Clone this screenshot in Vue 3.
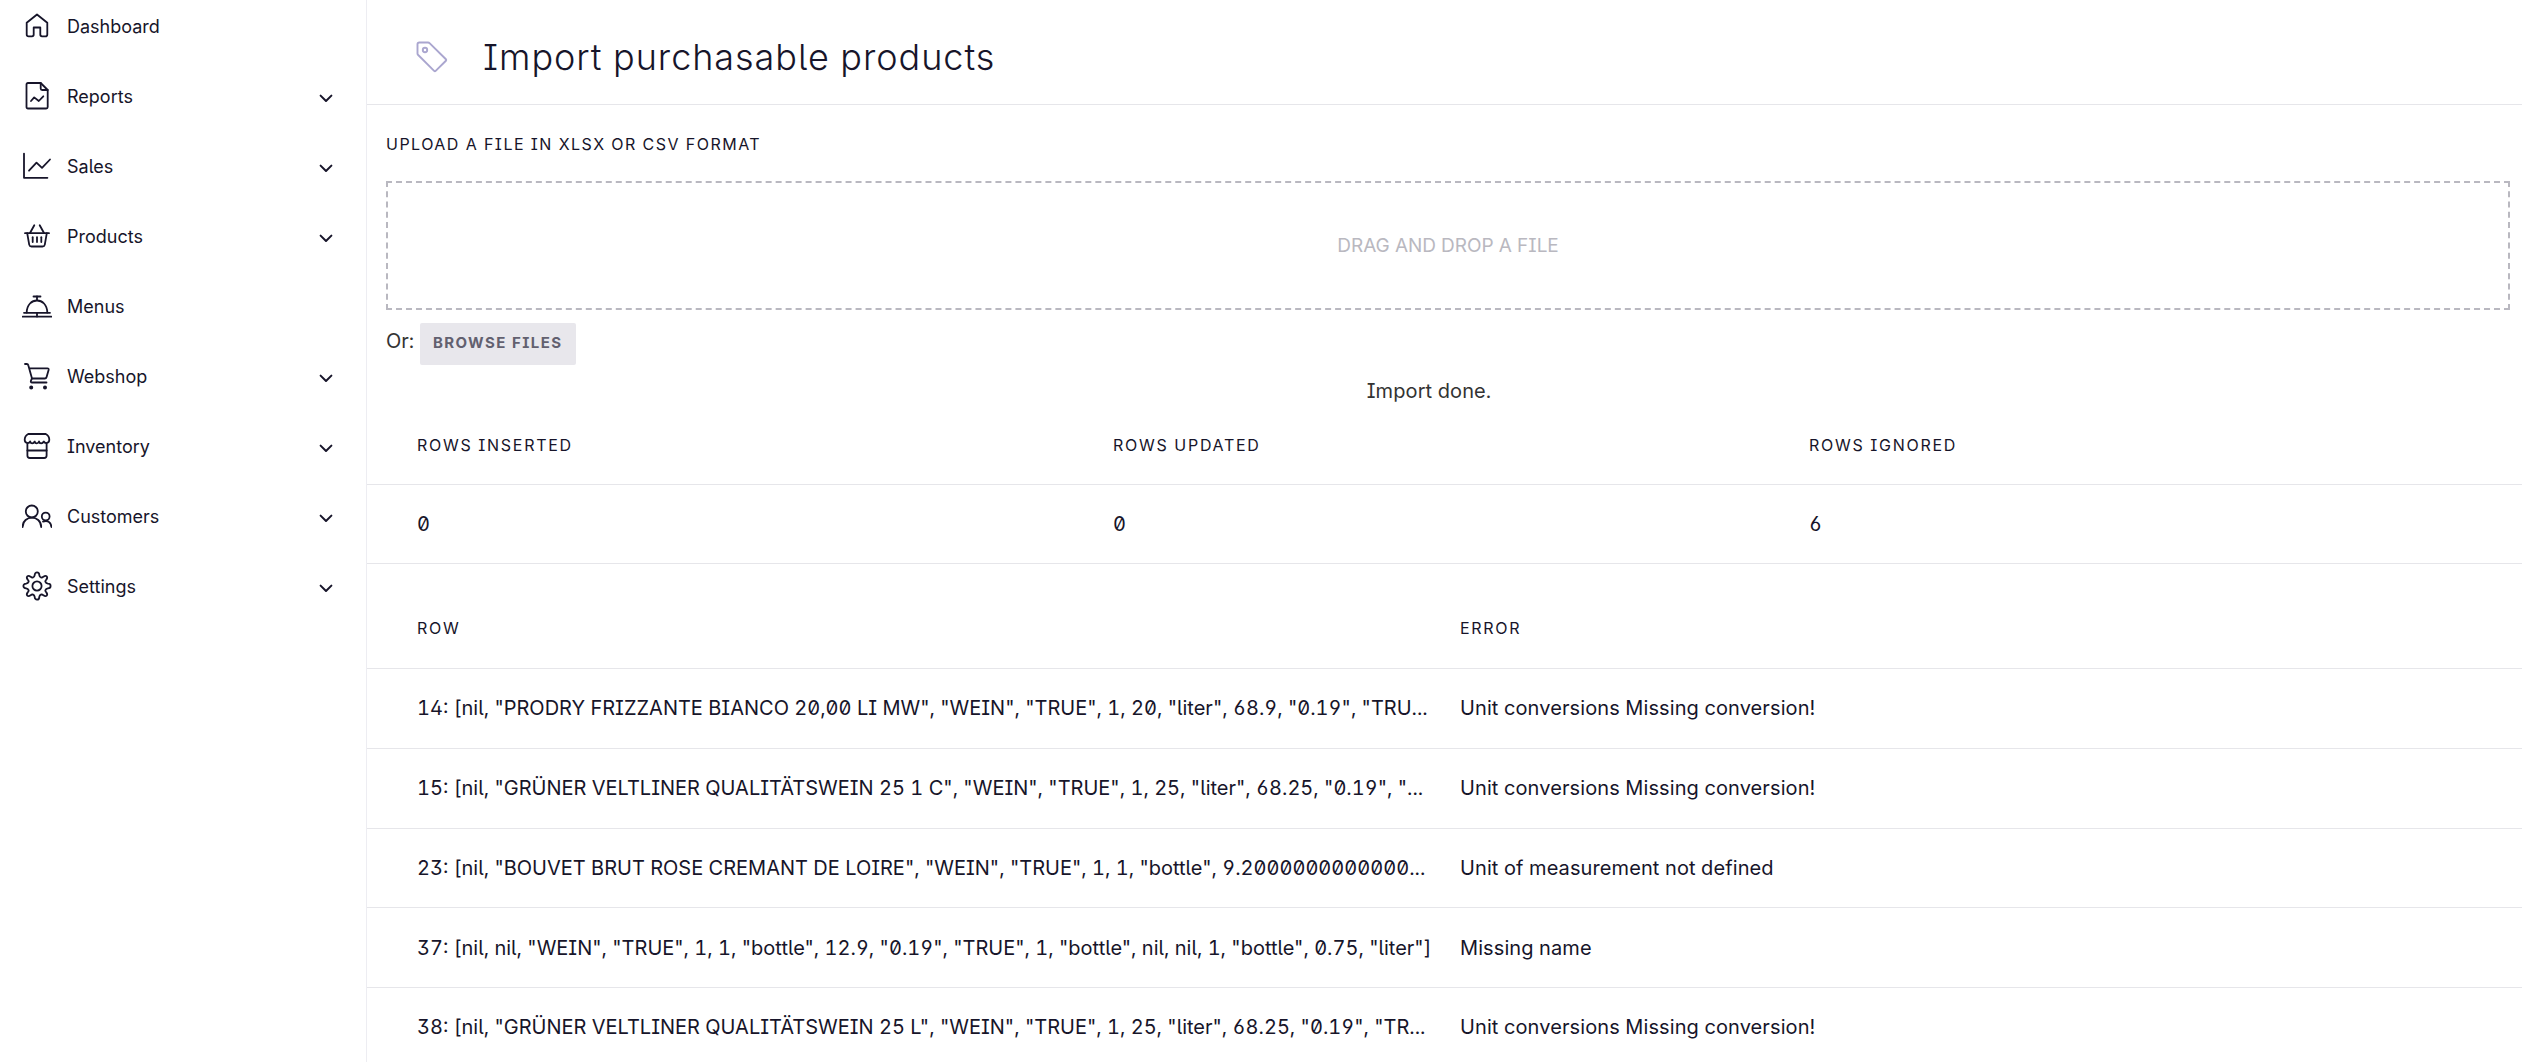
<template>
  <div class="layout">
    <nav class="sidebar">
      <a v-for="item in menu" :key="item.label" class="nav-item">
        <svg class="nav-icon" width="30" height="30" viewBox="0 0 30 30">
          <path v-for="d in item.paths" :key="d" :d="d" />
          <circle v-for="c in item.dots" :key="c" :cx="c" cy="26.4" r="1.1" class="dot" />
        </svg>
        <span class="nav-label">{{ item.label }}</span>
        <svg v-if="item.open" class="chevron" width="14" height="14" viewBox="0 0 14 14">
          <path d="M1.6 4.6L7 10l5.4-5.4" />
        </svg>
      </a>
    </nav>

    <main class="content">
      <header class="page-header">
        <svg class="tag" width="32" height="32" viewBox="0 0 32 32">
          <path d="M1.5 3.3Q1.5 1.5 3.3 1.5L12 1.5Q13 1.5 13.8 2.3L29.9 18.2Q30.6 19 29.9 19.8L19.7 29.9Q18.9 30.6 18.1 29.9L2.2 14Q1.5 13.3 1.5 12.4Z" />
          <circle cx="9" cy="9" r="2.2" />
        </svg>
        <h1>Import purchasable products</h1>
      </header>

      <section class="upload">
        <label class="upload-label">Upload a file in xlsx or csv format</label>
        <div class="dropzone">DRAG AND DROP A FILE</div>
        <div class="browse">
          <span>Or:</span>
          <button>Browse files</button>
        </div>
      </section>

      <p class="status">Import done.</p>

      <div class="table summary">
        <div class="row head">
          <div v-for="s in summary" :key="s.label">{{ s.label }}</div>
        </div>
        <div class="row">
          <div v-for="s in summary" :key="s.label">{{ s.value }}</div>
        </div>
      </div>

      <div class="table errors">
        <div class="row head">
          <div>Row</div>
          <div>Error</div>
        </div>
        <div v-for="e in errors" :key="e.row" class="row">
          <div>{{ e.row }}</div>
          <div class="message">{{ e.error }}</div>
        </div>
      </div>
    </main>
  </div>
</template>

<script setup>
const menu = [
  {
    label: 'Dashboard',
    open: false,
    paths: ['M4.7 11.8L15 3.5l10.3 8.3V23.4Q25.3 25.3 23.4 25.3H20Q18.3 25.3 18.3 23.6V16.5H11.7V23.6Q11.7 25.3 10 25.3H6.6Q4.7 25.3 4.7 23.4Z']
  },
  {
    label: 'Reports',
    open: true,
    paths: [
      'M6 2H18.7L25.7 9V26Q25.7 27.5 24.2 27.5H6Q4.5 27.5 4.5 26V3.5Q4.5 2 6 2Z',
      'M18.7 2V7.5Q18.7 9 20.2 9H25.7',
      'M9 20l3.2-3.6 4.6 3.6 4.5-4.7'
    ]
  },
  {
    label: 'Sales',
    open: true,
    paths: ['M2 2.6V26.8H25.4', 'M7 19.7l7.5-8 5.5 5.2 8-8.4']
  },
  {
    label: 'Products',
    open: true,
    paths: [
      'M3 12.2H27',
      'M5.2 12.2L7.2 23.6Q7.6 25.5 9.5 25.5H20.5Q22.4 25.5 22.8 23.6L24.8 12.2',
      'M8 12L12.3 4.2',
      'M22 12L17.7 4.2',
      'M10.7 16.2V21',
      'M15 16.2V21',
      'M19.3 16.2V21'
    ]
  },
  {
    label: 'Menus',
    open: false,
    paths: ['M11.5 5.5H18.5', 'M15 5.5V9', 'M4.7 21.5C5 5.5 25 5.5 25.3 21.5', 'M2 21.8H28', 'M.5 25.7H29.5', 'M15 22V25.5']
  },
  {
    label: 'Webshop',
    open: true,
    dots: [9.2, 23],
    paths: ['M3 3H4.8Q6 3 6.3 4.2L10 17.5H22.8Q24.2 17.5 24.6 16L26.6 9Q27 7.3 25.4 7.3H7.2', 'M9.8 17.7L8.9 19.8Q8.4 21.5 10 21.5H24.5']
  },
  {
    label: 'Inventory',
    open: true,
    paths: [
      'M6.2 3H23.8Q27.3 4.8 27.3 8.8C27.3 12.5 23 13 21.8 10.5C20.5 13 17.4 13 17 10.5C16 13 13.4 13 12.7 10.5C11.5 13 8.8 13 8.2 10.5C7 13 2.7 12.5 2.7 8.8Q2.7 4.8 6.2 3Z',
      'M5.4 12.4V24.5Q5.4 27 7.9 27H22.1Q24.6 27 24.6 24.5V12.4',
      'M5.4 19.5H24.6'
    ]
  },
  {
    label: 'Customers',
    open: true,
    paths: [
      'M15.8 10.5A6 6 0 1 1 3.8 10.5A6 6 0 1 1 15.8 10.5Z',
      'M.6 26C.9 13.6 18.9 13.6 19.2 26',
      'M27.6 15.5A3.9 3.9 0 1 1 19.8 15.5A3.9 3.9 0 1 1 27.6 15.5Z',
      'M21 20.6Q28.7 18.6 29.4 26'
    ]
  },
  {
    label: 'Settings',
    open: true,
    paths: [
      'M12.7 4.1C12.7 .5 17.3 .5 17.3 4.1Q17.5 6 19.3 6.7Q20.5 6.7 21.4 5.7C24.2 3.6 26.4 5.8 24.3 8.6Q23.3 9.5 23.3 10.7Q24 12.5 25.9 12.7C29.5 12.7 29.5 17.3 25.9 17.3Q24 17.5 23.3 19.3Q23.3 20.5 24.3 21.4C26.4 24.2 24.2 26.4 21.4 24.3Q20.5 23.3 19.3 23.3Q17.5 24 17.3 25.9C17.3 29.5 12.7 29.5 12.7 25.9Q12.5 24 10.7 23.3Q9.5 23.3 8.6 24.3C5.8 26.4 3.6 24.2 5.7 21.4Q6.7 20.5 6.7 19.3Q6 17.5 4.1 17.3C.5 17.3 .5 12.7 4.1 12.7Q6 12.5 6.7 10.7Q6.7 9.5 5.7 8.6C3.6 5.8 5.8 3.6 8.6 5.7Q9.5 6.7 10.7 6.7Q12.5 6 12.7 4.1Z',
      'M19.6 15A4.6 4.6 0 1 1 10.4 15A4.6 4.6 0 1 1 19.6 15Z'
    ]
  }
]

const summary = [
  { label: 'Rows inserted', value: 0 },
  { label: 'Rows updated', value: 0 },
  { label: 'Rows ignored', value: 6 }
]

const errors = [
  { row: '14: [nil, "PRODRY FRIZZANTE BIANCO 20,00 LI MW", "WEIN", "TRUE", 1, 20, "liter", 68.9, "0.19", "TRU...', error: 'Unit conversions Missing conversion!' },
  { row: '15: [nil, "GRÜNER VELTLINER QUALITÄTSWEIN 25 1 C", "WEIN", "TRUE", 1, 25, "liter", 68.25, "0.19", "...', error: 'Unit conversions Missing conversion!' },
  { row: '23: [nil, "BOUVET BRUT ROSE CREMANT DE LOIRE", "WEIN", "TRUE", 1, 1, "bottle", 9.2000000000000...', error: 'Unit of measurement not defined' },
  { row: '37: [nil, nil, "WEIN", "TRUE", 1, 1, "bottle", 12.9, "0.19", "TRUE", 1, "bottle", nil, nil, 1, "bottle", 0.75, "liter"]', error: 'Missing name' },
  { row: '38: [nil, "GRÜNER VELTLINER QUALITÄTSWEIN 25 L", "WEIN", "TRUE", 1, 25, "liter", 68.25, "0.19", "TR...', error: 'Unit conversions Missing conversion!' }
]
</script>

<style>
body {
  margin: 0;
  background: #fff;
}
</style>

<style scoped>
.layout {
  display: flex;
  height: 1062px;
  overflow: hidden;
  font-family: Inter, sans-serif;
  font-feature-settings: "ss02", "ss01", "zero", "cv08", "tnum";
  color: #17152a;
}

.sidebar {
  box-sizing: border-box;
  flex: none;
  width: 367px;
  padding: 0 33px 0 22px;
  border-right: 1px solid #ededf2;
}

.nav-item {
  display: flex;
  align-items: center;
  height: 70px;
}

.nav-item:first-child {
  margin-top: -9px;
}

.nav-icon {
  fill: none;
  stroke: currentColor;
  stroke-width: 1.8;
  stroke-linecap: round;
  stroke-linejoin: round;
}

.dot {
  fill: currentColor;
}

.nav-label {
  flex: 1;
  margin-left: 15px;
  font-size: 18px;
}

.chevron {
  margin: 3px 0 0;
  fill: none;
  stroke: currentColor;
  stroke-width: 2;
  stroke-linecap: round;
  stroke-linejoin: round;
}

.content {
  flex: 1;
  min-width: 0;
}

.page-header {
  display: flex;
  align-items: center;
  box-sizing: border-box;
  height: 105px;
  padding: 10px 0 0 49px;
  border-bottom: 1px solid #e6e6ea;
}

.tag {
  fill: none;
  stroke: #aaa6cf;
  stroke-width: 1.9;
}

h1 {
  margin: 0 0 0 35px;
  font-size: 36px;
  font-weight: 300;
  letter-spacing: 0.95px;
}

.upload {
  padding: 0 12px 0 19px;
}

.upload-label {
  display: block;
  height: 76px;
  line-height: 78px;
  font-size: 16px;
  letter-spacing: 1.48px;
  text-transform: uppercase;
}

.dropzone {
  box-sizing: border-box;
  height: 129px;
  border: 2px dashed #b9b8c0;
  color: #b9b8c0;
  font-size: 19px;
  line-height: 126px;
  text-align: center;
}

.browse {
  display: flex;
  height: 42px;
  margin-top: 13px;
  color: #333;
  font-size: 20px;
  line-height: 37px;
}

button {
  width: 156px;
  height: 42px;
  margin-left: 5.5px;
  padding: 0 0 3px;
  border: 0;
  border-radius: 2px;
  background: #e8e7ec;
  color: #62606f;
  font-family: inherit;
  font-feature-settings: inherit;
  font-size: 15px;
  font-weight: 700;
  letter-spacing: 1.4px;
  text-transform: uppercase;
}

.status {
  margin: 13px 31px 2px 0;
  color: #333;
  font-size: 20px;
  letter-spacing: 0.1px;
  line-height: 26px;
  text-align: center;
}

.row {
  display: grid;
  align-items: center;
  box-sizing: border-box;
  height: 79.75px;
  padding-left: 50px;
  border-bottom: 1px solid #e6e6ea;
  font-size: 20px;
  white-space: pre;
}

.head {
  padding-bottom: 1px;
  font-size: 16px;
  letter-spacing: 1.7px;
  text-transform: uppercase;
}

.summary .row {
  grid-template-columns: 696px 696px 1fr;
  height: 79px;
}

.errors {
  margin-top: 25px;
}

.errors .row {
  grid-template-columns: 1043px 1fr;
}

.errors .head {
  height: 80px;
  padding-bottom: 2px;
}

.message {
  letter-spacing: 0.1px;
}
</style>
